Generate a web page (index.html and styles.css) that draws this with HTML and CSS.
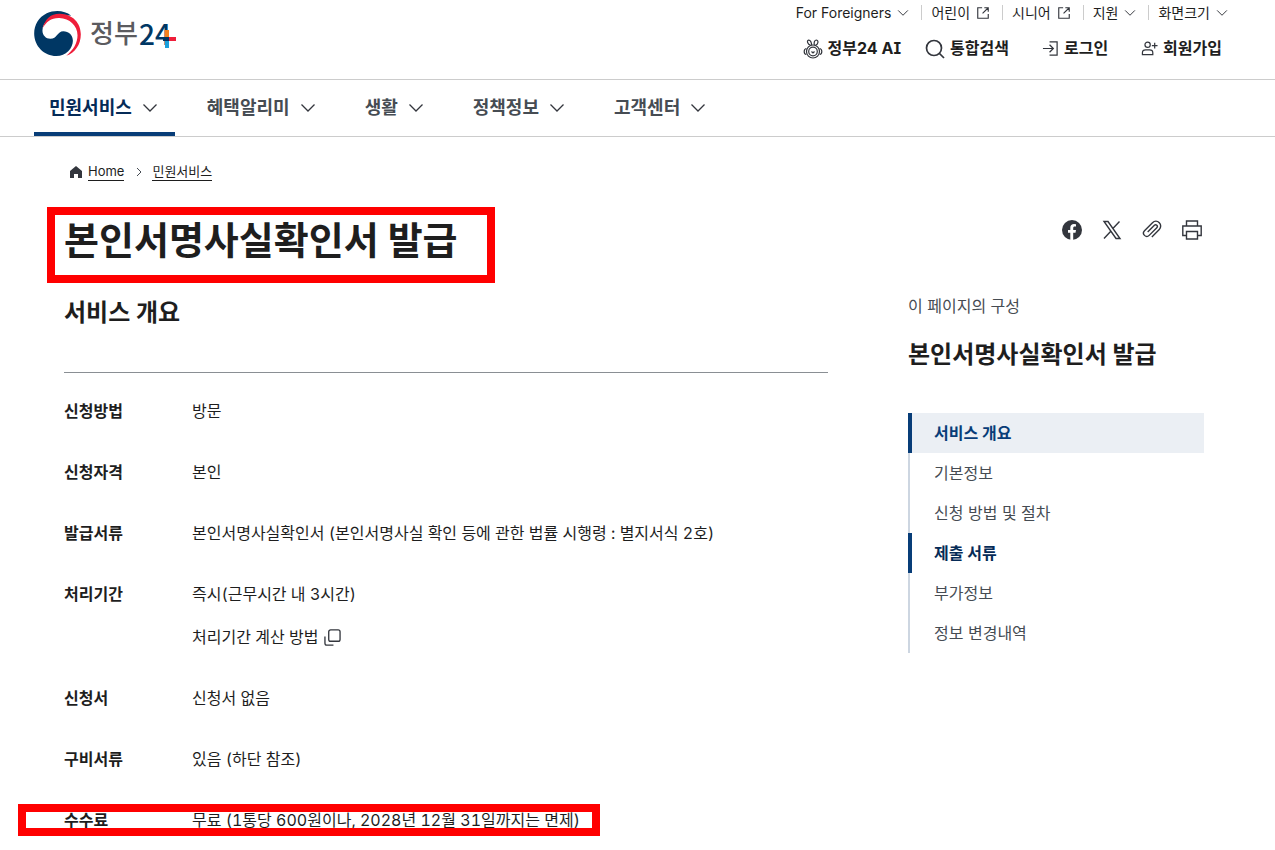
FILE: index.html
```html
<!DOCTYPE html>
<html lang="ko">
<head>
  <meta charset="UTF-8">
  <meta name="viewport" content="width=device-width, initial-scale=1.0">
  <title>본인서명사실확인서 발급 | 정부24</title>
  <link rel="stylesheet" href="styles.css">
</head>
<body>
  <!-- Shared icons -->
  <svg class="sprite" aria-hidden="true">
    <symbol id="chevron" viewBox="0 0 16 16"><path d="M1.500 4.500L8 11l6.500-6.500"/></symbol>
    <symbol id="external" viewBox="0 0 16 16"><path d="M7 2H2v12h12V9M9.500 2H14v4.500M14 2L7.500 8.500"/></symbol>
  </svg>

  <header class="header">
    <a href="#" class="logo" aria-label="정부24">
      <svg class="emblem" viewBox="0 0 141 136">
        <path fill="#003764" d="M112 14C92-2 62-4 38 7C14 19 0 42 0 68C0 106 30 136 67 136C96 136 117 113 117 90C117 72 104 61 88 61C70 61 69 84 49 84C35 84 25 73 25 59C25 30 55 12 112 14Z"/>
        <path fill="#ef1e3a" d="M25 53C33 22 52 7 78 8C116 9 141 36 141 70C141 102 123 126 97 135C119 117 131 96 131 73C131 44 107 22 76 21C53 20 36 32 25 53Z"/>
      </svg>
      <span class="wordmark">정부</span>
      <svg class="wordmark-num" viewBox="0 0 40 46">
        <text x="1" y="35" class="num">24</text>
        <path fill="#f58220" d="M27 20h4v7h-4z"/>
        <path fill="#003764" d="M25 27h6v4h-6z"/>
        <path fill="#ef1e3a" d="M31 27h7v4h-7z"/>
        <path fill="#1b9fdc" d="M27 31h4v7h-4z"/>
      </svg>
    </a>
    <div class="tools">
      <ul class="quick">
        <li><button type="button"><span>For Foreigners</span><svg class="ico sm"><use href="#chevron"/></svg></button></li>
        <li><a href="#">어린이<svg class="ico"><use href="#external"/></svg></a></li>
        <li><a href="#">시니어<svg class="ico"><use href="#external"/></svg></a></li>
        <li><button type="button">지원<svg class="ico sm"><use href="#chevron"/></svg></button></li>
        <li><button type="button">화면크기<svg class="ico sm"><use href="#chevron"/></svg></button></li>
      </ul>
      <div class="actions">
        <a href="#" class="ai">
          <svg class="ico lg" viewBox="0 0 20 20">
            <path d="M7.500 6.200C4.500 5.500 3.500 1.500 5.500 1.200C7.500 1 8.500 3.500 8.700 6M11.300 6C10.800 3.500 11.500 1 13.500 1C16 1.500 15 5.500 12.500 6.200"/>
            <circle cx="10" cy="12.500" r="6.500"/><circle cx="10" cy="12.500" r="4.300"/>
            <path d="M3.300 9.500C.5 10 .5 15 3.300 15.500M16.700 9.500C19.500 10 19.500 15 16.700 15.500M8.500 12.500l1.500 1.500 1.500-1.500"/>
          </svg>정부24 AI</a>
        <button type="button" class="search">
          <svg class="ico lg bold" viewBox="0 0 20 20"><circle cx="9" cy="9" r="7.500"/><path d="M14.500 14.500L19 19"/></svg>통합검색</button>
        <a href="#" class="login">
          <svg class="ico md" viewBox="0 0 18 18"><path d="M8 2h8v14H8M1 9h11M8 5l4 4-4 4"/></svg>로그인</a>
        <a href="#" class="join">
          <svg class="ico md" viewBox="0 0 18 18"><circle cx="7" cy="5" r="2.800"/><path d="M1.500 15.500v-2Q1.500 10.500 5 10.500h4Q12.500 10.500 12.500 13.500v2zM14.500 3v6M11.500 6h6"/></svg>회원가입</a>
      </div>
    </div>
  </header>

  <nav class="gnb" aria-label="주메뉴">
    <button type="button" class="active">민원서비스<svg class="ico"><use href="#chevron"/></svg></button>
    <button type="button">혜택알리미<svg class="ico"><use href="#chevron"/></svg></button>
    <button type="button">생활<svg class="ico"><use href="#chevron"/></svg></button>
    <button type="button">정책정보<svg class="ico"><use href="#chevron"/></svg></button>
    <button type="button">고객센터<svg class="ico"><use href="#chevron"/></svg></button>
  </nav>

  <div class="container">
    <nav class="breadcrumb" aria-label="현재 위치">
      <svg class="home" viewBox="0 0 12 12"><path d="M6 0L0 5v7h4V8h4v4h4V5z"/></svg>
      <a href="#">Home</a>
      <svg class="sep" viewBox="0 0 6 10"><path d="M1 1l4 4-4 4"/></svg>
      <a href="#">민원서비스</a>
    </nav>

    <div class="title-row">
      <h1 class="marked">본인서명사실확인서 발급</h1>
      <div class="share">
        <a href="#" aria-label="페이스북"><svg viewBox="0 0 20 20"><circle cx="10" cy="10" r="10" fill="#33363d"/><path fill="#fff" d="M8.300 20v-7.200H6V10h2.300V7.800C8.300 5.200 9.800 4 12 4l2 .2v2.400h-1.300c-1.100 0-1.500.7-1.500 1.500V10H14l-.5 2.800h-2.300V20z"/></svg></a>
        <a href="#" aria-label="X"><svg class="line" viewBox="0 0 20 20"><path d="M2 1.500h4L18 18.500h-4zM17.500 1.500l-7.100 7.600M8.800 11.200L2 18.500"/></svg></a>
        <button type="button" aria-label="링크 복사"><svg class="line" viewBox="0 0 20 20"><path transform="rotate(45 10 10)" d="M14.800 15V4.500a4.800 4.800 0 0 0-9.600 0v11.300a3.300 3.300 0 0 0 6.600 0V5a1.700 1.700 0 0 0-3.400 0v9.500"/></svg></button>
        <button type="button" aria-label="인쇄"><svg class="line" viewBox="0 0 20 20"><path d="M4.500 6V1h11v5M4.500 15.500H.8V6h18.400v9.500h-3.700M4.500 11.500h11V19h-11z"/></svg></button>
      </div>
    </div>

    <div class="content">
      <main>
        <h2>서비스 개요</h2>
        <dl class="info">
          <div class="row"><dt>신청방법</dt><dd>방문</dd></div>
          <div class="row"><dt>신청자격</dt><dd>본인</dd></div>
          <div class="row"><dt>발급서류</dt><dd>본인서명사실확인서 (본인서명사실 확인 등에 관한 법률 시행령 : 별지서식 2호)</dd></div>
          <div class="row">
            <dt>처리기간</dt>
            <dd>
              <p>즉시(근무시간 내 3시간)</p>
              <button type="button" class="popup">처리기간 계산 방법<svg viewBox="0 0 18 18"><rect x="5" y="1" width="12" height="12" rx="2"/><path d="M1 8v7q0 2 2 2h7"/></svg></button>
            </dd>
          </div>
          <div class="row"><dt>신청서</dt><dd>신청서 없음</dd></div>
          <div class="row"><dt>구비서류</dt><dd>있음 (하단 참조)</dd></div>
          <div class="row marked"><dt>수수료</dt><dd>무료 (1통당 600원이나, 2028년 12월 31일까지는 면제)</dd></div>
        </dl>
      </main>

      <aside class="toc">
        <p>이 페이지의 구성</p>
        <h2>본인서명사실확인서 발급</h2>
        <ul>
          <li><a href="#" class="on current">서비스 개요</a></li>
          <li><a href="#">기본정보</a></li>
          <li><a href="#">신청 방법 및 절차</a></li>
          <li><a href="#" class="on">제출 서류</a></li>
          <li><a href="#">부가정보</a></li>
          <li><a href="#">정보 변경내역</a></li>
        </ul>
      </aside>
    </div>
  </div>
</body>
</html>
```

FILE: styles.css
```css
* { box-sizing: border-box; margin: 0; padding: 0; }
body {
  font-family: Inter, "Noto Sans CJK KR", sans-serif;
  font-size: 16px;
  line-height: 25px;
  color: #1e1e1e;
  background: #fff;
}
a { color: inherit; text-decoration: none; }
button { font: inherit; color: inherit; background: none; border: none; cursor: pointer; }
ul { list-style: none; }
svg { flex: none; fill: none; stroke: none; }
.sprite { display: none; }
.ico {
  width: 14px; height: 14px;
  stroke: #33363d; stroke-width: 1.3;
}
.ico.sm { width: 12px; height: 12px; }
.ico.md { width: 17px; height: 17px; }
.ico.lg { width: 20px; height: 20px; stroke-width: 1.2; }
.ico.bold { stroke-width: 1.7; }

/* Header */
.header {
  display: flex; justify-content: space-between; align-items: flex-start;
  height: 80px;
  padding: 0 47px 0 34px;
  border-bottom: 1px solid #ccc;
}
.logo { display: flex; align-items: center; padding-top: 10px; }
.emblem { width: 47px; height: 45px; margin-right: 9px; }
.wordmark { font-size: 26px; font-weight: 500; color: #5b5b5f; }
.wordmark-num { width: 40px; height: 46px; overflow: visible; }
.num { font: 500 28px "Noto Sans CJK KR", sans-serif; fill: #003764; }
.tools { display: flex; flex-direction: column; align-items: flex-end; gap: 11px; }
.quick { display: flex; font-size: 14px; }
.quick li { display: flex; align-items: center; }
.quick li + li::before { content: ""; height: 15px; margin: 0 9px 0 12px; border-left: 1px solid #ccc; }
.quick a, .quick button { display: flex; align-items: center; gap: 6px; }
.actions { display: flex; gap: 33px; font-weight: 700; padding-right: 6px; }
.actions a, .actions button { display: flex; align-items: center; gap: 5px; font-weight: 700; }
.actions .ai { margin-right: -9px; font-feature-settings: "cv08"; }

/* Main menu */
.gnb {
  display: flex; gap: 17px;
  height: 57px;
  padding-left: 34px;
  border-bottom: 1px solid #ccc;
}
.gnb button {
  display: flex; align-items: center; gap: 10px;
  padding: 3px 17px 0 15px;
  font-size: 18px; font-weight: 700;
  color: #464c53;
  border-bottom: 4px solid transparent;
}
.gnb .ico { width: 16px; height: 16px; }
.gnb button.active { color: #052b57; border-color: #083d78; }

/* Page */
.container { padding: 25px 71px 16px 64px; }
.breadcrumb { display: flex; align-items: center; padding-left: 6px; font-size: 13px; }
.breadcrumb a { line-height: 18px; border-bottom: 1px solid #1e1e1e; }
.home { width: 12px; height: 12px; margin-right: 6px; fill: #33363d; }
.sep { width: 6px; height: 10px; margin: 0 10px 0 12px; stroke: #464c53; }

.title-row { display: flex; justify-content: space-between; margin-top: 34px; }
h1 { font-size: 38px; line-height: 50px; }
.marked { position: relative; }
/* red highlight frame */
.marked::after {
  content: ""; position: absolute;
  border: 8px solid #f00;
  pointer-events: none;
}
h1.marked::after { inset: -8px -37px -18px -17px; }
.share { display: flex; gap: 20px; align-items: flex-start; padding: 5px 2px 0 0; }
.share a, .share button { display: flex; }
.share svg { width: 20px; height: 20px; }
.line { stroke: #33363d; stroke-width: 1.4; }

.content { display: flex; gap: 80px; margin-top: 29px; }
main { flex: 1; }
h2 { font-size: 24px; line-height: 36px; }
main h2 { padding-top: 1px; }
.info {
  display: flex; flex-direction: column; gap: 36px;
  margin-top: 41px; padding-top: 26px;
  border-top: 1px solid #8a8f94;
}
.row { display: flex; }
.row dt { width: 128px; font-weight: 700; }
.row dd { flex: 1; font-variant-numeric: tabular-nums; }
.popup { display: flex; align-items: center; gap: 6px; margin-top: 18px; }
.popup svg { width: 17px; height: 17px; stroke: #33363d; stroke-width: 1.4; }
.row.marked::after { inset: -4px 228px -3px -46px; }

.toc { width: 296px; }
.toc p { color: #464c53; }
.toc h2 { margin: 18px 0 40px; }
.toc a {
  display: block;
  padding-left: 24px;
  line-height: 40px;
  color: #464c53;
  border-left: 2px solid #cdd6e1;
}
.toc a.on { padding-left: 22px; font-weight: 700; color: #052b57; border-left: 4px solid #083d78; }
.toc a.current { color: #083d78; background: #ebeff4; }
```
